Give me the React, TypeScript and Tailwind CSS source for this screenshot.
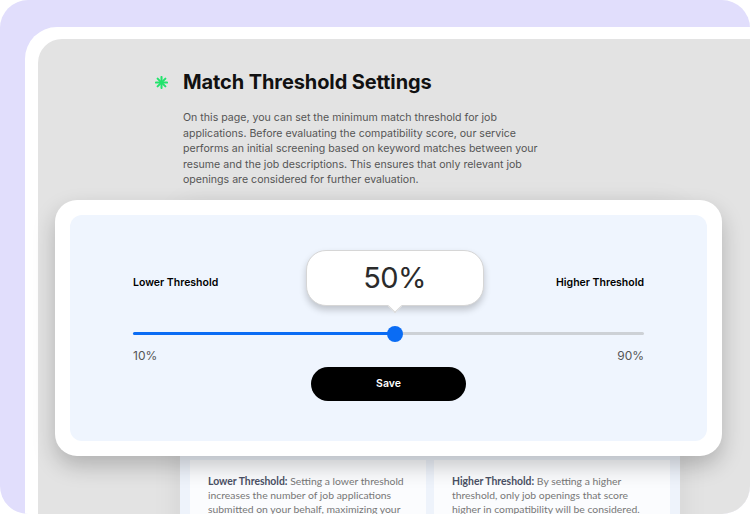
import React from "react";

const intro =
  "On this page, you can set the minimum match threshold for job applications. Before evaluating the compatibility score, our service performs an initial screening based on keyword matches between your resume and the job descriptions. This ensures that only relevant job openings are considered for further evaluation.";

const notes = [
  {
    label: "Lower Threshold:",
    text: "Setting a lower threshold increases the number of job applications submitted on your behalf, maximizing your chances of landing interviews.",
  },
  {
    label: "Higher Threshold:",
    text: "By setting a higher threshold, only job openings that score higher in compatibility will be considered.",
  },
];

function Sparkle() {
  return (
    <svg width="13" height="13" viewBox="0 0 14 14" className="shrink-0">
      <g stroke="#22e36c" strokeWidth="2.2" strokeLinecap="round">
        <line x1="7" y1="1" x2="7" y2="13" />
        <line x1="1" y1="7" x2="13" y2="7" />
        <line x1="2.8" y1="2.8" x2="11.2" y2="11.2" />
        <line x1="11.2" y1="2.8" x2="2.8" y2="11.2" />
      </g>
    </svg>
  );
}

function ThresholdCard() {
  return (
    <div className="absolute left-[55px] top-[200px] w-[667px] h-[256px] rounded-[22px] bg-white p-[15px] shadow-[0_10px_22px_rgba(0,0,0,0.22)]">
      <div className="h-full rounded-[12px] bg-[#eff5fe] px-[63px] pt-[58px] flex flex-col font-['Inter',sans-serif]">
        <div className="h-[20px] flex items-center justify-between text-[10.5px] font-semibold text-black">
          <span>Lower Threshold</span>
          <span>Higher Threshold</span>
        </div>

        <div className="relative mt-[32px] h-[16px]">
          <div className="absolute left-0 right-0 top-[6.5px] h-[3px] rounded-full bg-[#cdd1d6]" />
          <div className="absolute left-0 w-[51.2%] top-[6.5px] h-[3px] rounded-full bg-[#0a6cf4]" />
          <div className="absolute left-[51.2%] top-[0.5px] -ml-[8px] w-[16px] h-[16px] rounded-full bg-[#0a6cf4]" />

          {/* value tooltip */}
          <div className="absolute left-[51.2%] -translate-x-1/2 bottom-[35px] w-[178px]">
            <div className="relative h-[56px] rounded-[20px] border border-[#d6d6d6] bg-white shadow-[0_4px_7px_rgba(0,0,0,0.2)] flex items-center justify-center">
              <span className="text-[29px] font-normal text-[#2b2b2b] tracking-[-0.5px]">50%</span>
              <div className="absolute left-1/2 -bottom-[6px] -ml-[5px] w-[10px] h-[10px] rotate-45 bg-white border-r border-b border-[#d6d6d6]" />
            </div>
          </div>
        </div>

        <div className="mt-[7px] h-[15px] flex items-center justify-between text-[12px] text-[#555]">
          <span>10%</span>
          <span>90%</span>
        </div>

        <button className="mt-[4px] self-center w-[155px] h-[34px] rounded-full bg-black text-white text-[10.5px] font-semibold">
          Save
        </button>
      </div>
    </div>
  );
}

export default function App() {
  return (
    <div className="relative w-[750px] h-[514px] bg-white overflow-hidden">
      <div className="h-full rounded-[28px] overflow-hidden bg-[#e1defc] pl-[25px] pt-[27px]">
        <div className="h-full rounded-tl-[32px] bg-white pl-[13px] pt-[12px]">
          <div className="h-full rounded-tl-[24px] bg-[#e3e3e3] pt-[29px] pl-[117px]">
            <div className="w-[550px]">
              <div className="flex items-center h-[28px]">
                <div className="w-[28px] flex justify-start">
                  <Sparkle />
                </div>
                <h1 className="text-[20px] font-bold text-[#111] font-['Inter',sans-serif] tracking-[-0.1px]">
                  Match Threshold Settings
                </h1>
              </div>

              <p className="mt-[14px] ml-[28px] w-[362px] text-[10.6px] leading-[15.5px] text-[#555] font-['Inter',sans-serif]">
                {intro}
              </p>

              <div className="mt-[18px] mx-[25px] rounded-[10px] bg-[#eef3fb] p-[10px] shadow-[0_0_30px_rgba(0,0,0,0.08)]">
                <div className="h-[236px]" />
                <div className="mt-[8px] grid grid-cols-2 gap-[8px]">
                  {notes.map((n) => (
                    <div key={n.label} className="bg-[#fbfcfe] px-[18px] pt-[14px] pb-[14px] text-[10.4px] leading-[14px] text-[#777] font-['Lato',sans-serif]">
                      <span className="font-bold text-[#4a5064]">{n.label}</span> {n.text}
                    </div>
                  ))}
                </div>
              </div>
            </div>
          </div>
        </div>
      </div>
      <ThresholdCard />
    </div>
  );
}
